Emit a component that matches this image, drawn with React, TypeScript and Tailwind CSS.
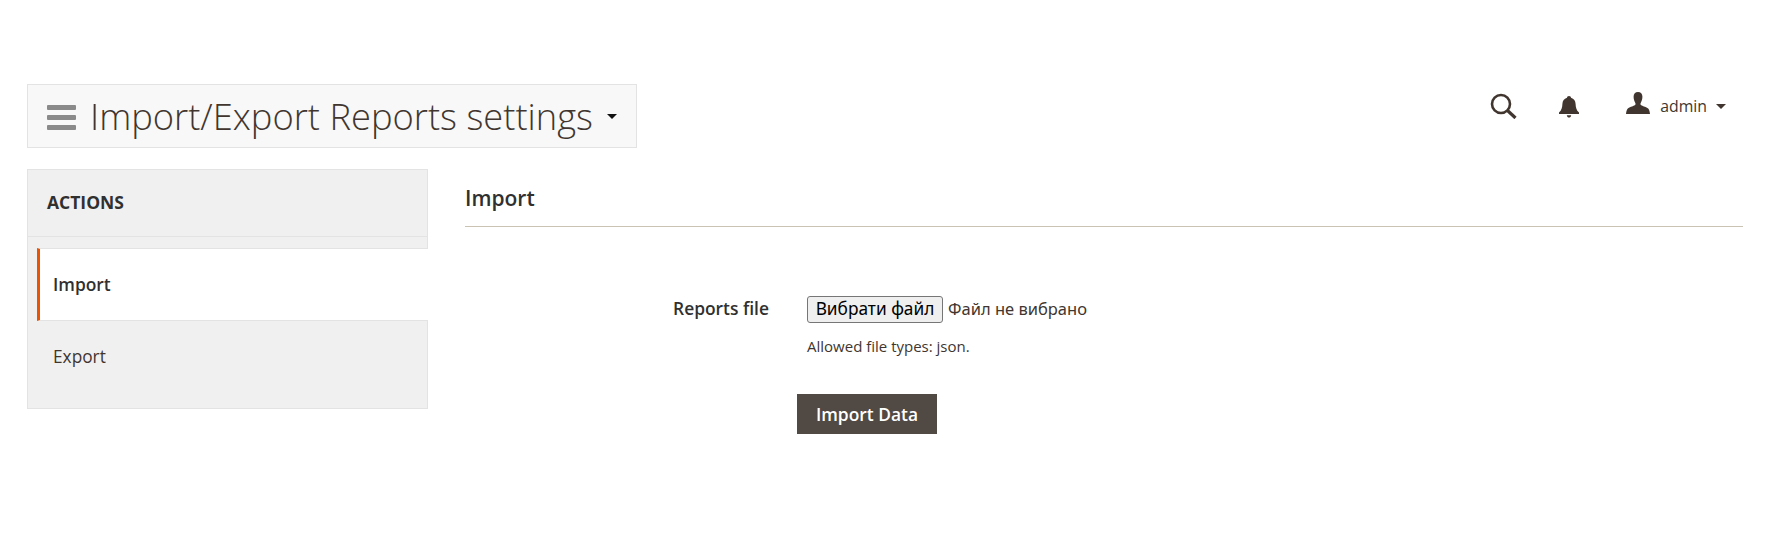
import { FC } from 'react';

const FONT = "font-['Open_Sans',sans-serif]";

const SearchIcon: FC = () => (
  <svg width="27" height="26" viewBox="0 0 27 26" fill="none" stroke="#41362f">
    <circle cx="11" cy="11" r="9" strokeWidth="2.6" />
    <path d="M17.5 17.5 L25.5 25" strokeWidth="3.2" />
  </svg>
);

const BellIcon: FC = () => (
  <svg width="20" height="22" viewBox="0 0 20 22" fill="#41362f">
    <path d="M10 0c1.200 0 2 .8 2 1.800 3 .8 4.400 3.200 4.600 6.200.2 3.400.6 6 3.400 8.600V18H0v-1.400C2.800 14 3.200 11.400 3.400 8 3.600 5 5 2.600 8 1.800 8 .8 8.800 0 10 0z" />
    <path d="M7.800 19.200h4.400C12 20.700 11.100 21.600 10 21.600s-2-.9-2.200-2.400z" />
  </svg>
);

const UserIcon: FC = () => (
  <svg width="24" height="22" viewBox="0 0 24 22" fill="#41362f">
    <path d="M12 0c2.800 0 4.400 1.700 4.400 4.600 0 2.600-.7 4.900-1.700 6.300-.5.8-.3 1.800.5 2.300 1.700 1 6 1.900 7.200 3.600.9 1.300 1.400 3.100 1.600 5.200H0c.2-2.100.7-3.900 1.600-5.200 1.200-1.700 5.500-2.600 7.200-3.600.8-.5 1-1.500.5-2.300-1-1.400-1.700-3.700-1.700-6.300C7.600 1.700 9.200 0 12 0z" />
  </svg>
);

export default function App() {
  return (
    <div className={`${FONT} min-h-[544px] bg-white pt-[84px] pr-[27px] pl-[27px] text-[#41362f]`}>
      <header className="flex items-start justify-between">
        <div className="flex h-[64px] w-[610px] items-center border border-[#e3e3e3] bg-[#f8f8f8] pl-[19px]">
          <div className="mt-[3px] flex w-[29px] flex-col gap-[5px]">
            <span className="h-[5px] rounded-[1px] bg-[#8a8a8a]" />
            <span className="h-[5px] rounded-[1px] bg-[#8a8a8a]" />
            <span className="h-[5px] rounded-[1px] bg-[#8a8a8a]" />
          </div>
          <h1 className="ml-[14px] text-[36.3px] leading-none font-light whitespace-nowrap">Import/Export Reports settings</h1>
          <span className="ml-[14px] h-0 w-0 border-x-[5px] border-t-[5px] border-x-transparent border-t-[#111111]" />
        </div>
        <div className="flex items-start pt-[9px] pr-[17px]">
          <SearchIcon />
          <div className="mt-[3px] ml-[42px]"><BellIcon /></div>
          <div className="mt-[-1px] ml-[47px]"><UserIcon /></div>
          <span className="mt-[3px] ml-[10px] text-[15.8px] leading-[21px]">admin</span>
          <span className="mt-[11px] ml-[9px] h-0 w-0 border-x-[5px] border-t-[5px] border-x-transparent border-t-[#41362f]" />
        </div>
      </header>

      <div className="mt-[21px] flex items-start">
        <aside className="h-[240px] w-[401px] shrink-0 border border-[#e3e3e3] bg-[#f0f0f0]">
          <div className="flex h-[67px] items-center border-b border-[#e3e3e3] pb-[2px] pl-[19px] text-[17.5px] font-bold text-[#303030]">ACTIONS</div>
          <nav className="mt-[11px]">
            <div className="mr-[-1px] ml-[9px] flex h-[73px] items-center border-y border-r-0 border-[#e3e3e3] border-l-[3px] border-l-[#eb5202] bg-white pl-[13px] text-[17.4px] font-semibold text-[#303030]">Import</div>
            <div className="flex h-[72px] items-center pl-[25px] text-[17.3px]">Export</div>
          </nav>
        </aside>

        <main className="ml-[37px] flex-1">
          <h2 className="h-[58px] border-b border-[#cac3b4] pt-[15px] text-[21px] leading-[28px] font-semibold text-[#303030]">Import</h2>
          <div className="mt-[69px] flex items-start">
            <label className="w-[304px] text-right text-[17.4px] leading-[25px] font-semibold text-[#303030]">Reports file</label>
            <div className="ml-[38px]">
              <div className="flex items-center">
                <button type="button" className="h-[27px] w-[136px] rounded-[3px] border border-[#767676] bg-[#efefef] pb-[1px] font-['Noto_Sans',sans-serif] text-[17.300px] leading-none whitespace-nowrap text-black">Вибрати файл</button>
                <span className="mb-[2px] ml-[5px] font-['Noto_Sans',sans-serif] text-[16.500px] leading-[24px]">Файл не вибрано</span>
              </div>
              <p className="mt-[13px] text-[15px] leading-[20px]">Allowed file types: json.</p>
            </div>
          </div>
          <button type="button" className="mt-[38px] ml-[332px] block h-[40px] w-[140px] bg-[#514943] text-[17.4px] font-semibold text-white">Import Data</button>
        </main>
      </div>
    </div>
  );
}
